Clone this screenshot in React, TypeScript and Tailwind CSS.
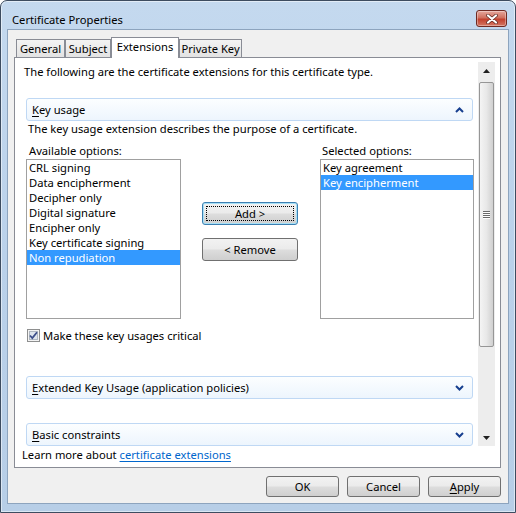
import React from "react";

const FONT = "font-['Noto_Sans',sans-serif]";

const available = [
  "CRL signing",
  "Data encipherment",
  "Decipher only",
  "Digital signature",
  "Encipher only",
  "Key certificate signing",
  "Non repudiation",
];
const chosen = ["Key agreement", "Key encipherment"];

function Chevron({ up }: { up?: boolean }) {
  return (
    <svg width="9" height="6" viewBox="0 0 9 6">
      <path
        d={up ? "M1 5 L4.5 1.5 L8 5" : "M1 1 L4.5 4.5 L8 1"}
        fill="none"
        stroke="#173f8f"
        strokeWidth="2"
      />
    </svg>
  );
}

function SectionHeader({ accel, rest, up, className = "" }: { accel: string; rest: string; up?: boolean; className?: string }) {
  return (
    <div
      className={`ml-[6px] w-[447px] h-[23px] shrink-0 flex items-center justify-between pl-[5px] pr-[8px] rounded-[3px] border border-[#bfd8f4] bg-gradient-to-b from-[#fcfeff] to-[#edf5fd] ${className}`}
    >
      <span>
        <span className="underline underline-offset-2">{accel}</span>
        {rest}
      </span>
      <Chevron up={up} />
    </div>
  );
}

function ListBox({ items, selected, width }: { items: string[]; selected: number; width: string }) {
  return (
    <div className={`${width} h-[160px] border border-[#a0a0a0] bg-white`}>
      {items.map((it, i) => (
        <div
          key={it}
          className={`h-[15px] leading-[15px] pl-[2px] whitespace-nowrap ${i === selected ? "bg-[#3399ff] text-white" : ""}`}
        >
          {it}
        </div>
      ))}
    </div>
  );
}

function Button({ children, focused, className = "" }: { children: React.ReactNode; focused?: boolean; className?: string }) {
  return (
    <div
      className={`relative flex items-center justify-center rounded-[3px] border bg-[linear-gradient(#f2f2f2_0%,#ebebeb_48%,#dddddd_52%,#cfcfcf_100%)] ${
        focused ? "border-[#3c7fb1] shadow-[inset_0_0_0_1px_#a6e0f7]" : "border-[#707070]"
      } ${className}`}
    >
      {focused && <span className="absolute inset-[3px] border border-dotted border-black" />}
      <span className="relative">{children}</span>
    </div>
  );
}

function Scrollbar() {
  return (
    <div className="w-[17px] h-full flex flex-col bg-[#ededed]">
      <div className="h-[17px] flex items-center justify-center">
        <svg width="7" height="4" viewBox="0 0 7 4">
          <path d="M3.5 0 L7 4 L0 4 Z" fill="#202020" />
        </svg>
      </div>
      <div className="flex-1">
        <div className="mt-[3px] ml-[1px] w-[15px] h-[265px] rounded-[2px] border border-[#969696] bg-gradient-to-r from-[#f4f4f4] via-[#e8e8e8] to-[#d0d0d0] flex items-center justify-center">
          <div className="flex flex-col gap-[1px]">
            {[0, 1, 2, 3].map((i) => (
              <div key={i} className="w-[7px] h-[1px] bg-[#6b6b6b] shadow-[0_1px_0_#ffffff]" />
            ))}
          </div>
        </div>
      </div>
      <div className="h-[17px] flex items-center justify-center">
        <svg width="7" height="4" viewBox="0 0 7 4">
          <path d="M0 0 L7 0 L3.5 4 Z" fill="#202020" />
        </svg>
      </div>
    </div>
  );
}

function CheckBox() {
  return (
    <svg width="13" height="13" viewBox="0 0 13 13">
      <rect x="0.5" y="0.5" width="12" height="12" fill="#f4f4f4" stroke="#8e8f8f" />
      <rect x="2.5" y="2.5" width="8" height="8" fill="#dfe6ee" stroke="#b0b8c2" />
      <path d="M3 6.5 L5.3 9 L10 3.2" fill="none" stroke="#3d4f8a" strokeWidth="1.8" />
    </svg>
  );
}

function CloseButton() {
  return (
    <div className="mr-[2px] w-[31px] h-[17px] rounded-[3px] border border-[#6f2a22] bg-[linear-gradient(#e5a89d_0%,#d0705f_45%,#c2412e_55%,#d47764_100%)] shadow-[inset_0_0_0_1px_rgba(255,255,255,0.35)] flex items-center justify-center">
      <svg width="12" height="10" viewBox="0 0 12 10">
        <path d="M2 1.5 L10 8.5 M10 1.5 L2 8.5" stroke="#5b2720" strokeWidth="3.6" strokeLinecap="round" />
        <path d="M2 1.5 L10 8.5 M10 1.5 L2 8.5" stroke="#ffffff" strokeWidth="2.2" strokeLinecap="round" />
      </svg>
    </div>
  );
}

function Tab({ label, width, active }: { label: string; width: string; active?: boolean }) {
  return active ? (
    <div className={`${width} h-[21px] -mb-[1px] relative z-10 border border-b-0 border-[#898c95] bg-white flex justify-center pt-[1px] whitespace-nowrap`}>
      {label}
    </div>
  ) : (
    <div className={`${width} h-[18px] border border-b-0 border-[#898c95] bg-gradient-to-b from-[#f3f3f3] to-[#e3e3e3] flex justify-center pt-[1px] whitespace-nowrap`}>
      {label}
    </div>
  );
}

export default function App() {
  return (
    <div
      className={`${FONT} text-[11.2px] leading-[15px] text-black w-[516px] h-[513px] flex flex-col rounded-t-[7px] border border-[#3d4c60] bg-gradient-to-b from-[#c4d9ef] via-[#bad1ea] to-[#b7cee7] shadow-[inset_0_0_0_1px_rgba(255,255,255,0.5)] px-[6px] pb-[8px] overflow-hidden`}
    >
      <div className="h-[28px] shrink-0 flex items-start justify-between pt-[9px] pl-[5px]">
        <span className="mt-[2px]">Certificate Properties</span>
        <CloseButton />
      </div>

      <div className="flex-1 flex flex-col border border-[#8da4be] bg-[#f0f0f0]">
        <div className="h-[27px] shrink-0 flex items-end pl-[8px]">
          <Tab label="General" width="w-[49px]" />
          <Tab label="Subject" width="w-[46px]" />
          <Tab label="Extensions" width="w-[68px]" active />
          <Tab label="Private Key" width="w-[63px]" />
        </div>

        <div className="ml-[6px] w-[487px] h-[411px] shrink-0 border border-[#898c95] bg-white flex flex-col px-[5px] pt-[4px]">
          <div className="h-[384px] shrink-0 flex overflow-hidden">
            <div className="flex-1 flex flex-col">
              <div className="mt-[2px] h-[15px] pl-[4px]">
                The following are the certificate extensions for this certificate type.
              </div>
              <SectionHeader accel="K" rest="ey usage" up className="mt-[19px]" />
              <div className="h-[15px] pl-[8px]">The key usage extension describes the purpose of a certificate.</div>

              <div className="mt-[7px] ml-[6px] flex">
                <div className="w-[155px]">
                  <div className="h-[16px] pl-[3px]">Available options:</div>
                  <ListBox items={available} selected={6} width="w-[155px]" />
                </div>
                <div className="ml-[21px] w-[96px] pt-[59px] flex flex-col">
                  <Button focused className="h-[23px]">Add &gt;</Button>
                  <Button className="h-[23px] mt-[13px]">&lt; Remove</Button>
                </div>
                <div className="ml-[22px] w-[154px]">
                  <div className="h-[16px] pl-[2px]">Selected options:</div>
                  <ListBox items={chosen} selected={1} width="w-[154px]" />
                </div>
              </div>

              <div className="mt-[9px] ml-[7px] h-[15px] flex items-center gap-[3px]">
                <CheckBox />
                <span>Make these key usages critical</span>
              </div>

              <SectionHeader accel="E" rest="xtended Key Usage (application policies)" className="mt-[33px]" />
              <SectionHeader accel="B" rest="asic constraints" className="mt-[24px]" />
            </div>
            <Scrollbar />
          </div>
          <div className="mt-[1px] h-[15px] pl-[2px]">
            Learn more about{" "}
            <span className="text-[#0066cc] underline underline-offset-2">certificate extensions</span>
          </div>
        </div>

        <div className="mt-[8px] pr-[7px] flex justify-end gap-[8px]">
          <Button className="w-[73px] h-[21px]">OK</Button>
          <Button className="w-[73px] h-[21px]">Cancel</Button>
          <Button className="w-[73px] h-[21px]">
            <span className="underline underline-offset-2">A</span>pply
          </Button>
        </div>
      </div>
    </div>
  );
}
